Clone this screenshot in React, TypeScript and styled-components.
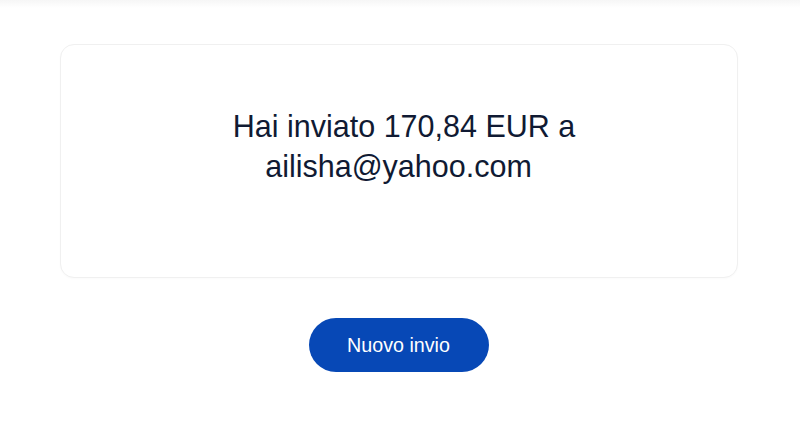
import styled, { createGlobalStyle } from "styled-components";

const GlobalStyle = createGlobalStyle`
  html, body {
    margin: 0;
    padding: 0;
    background: #ffffff;
    font-family: "Liberation Sans", Arial, sans-serif;
  }
`;

const Page = styled.div`
  min-height: 441px;
  background: linear-gradient(#f6f6f6 0, #ffffff 8px);
  padding: 44px 3px 0 0;
  box-sizing: border-box;
  display: flex;
  flex-direction: column;
  align-items: center;
`;

const Card = styled.div`
  width: 678px;
  box-sizing: border-box;
  border: 1px solid #f0f0f0;
  border-radius: 14px;
  padding: 61px 40px 91px;
  background: #fff;
  box-shadow: 0 1px 2px rgba(0, 0, 0, 0.02);
`;

const Message = styled.p`
  margin: 0 auto;
  max-width: 420px;
  text-align: center;
  text-indent: 11px;
  font-size: 30.5px;
  line-height: 40px;
  color: #101a33;
`;

const Button = styled.button`
  margin-top: 40px;
  width: 180px;
  height: 54px;
  border: none;
  border-radius: 27px;
  background: #0748b6;
  color: #ffffff;
  font-family: "Liberation Sans", Arial, sans-serif;
  font-size: 19.7px;
  cursor: pointer;
`;

export default function App() {
  return (
    <>
      <GlobalStyle />
      <Page>
        <Card>
          <Message>Hai inviato 170,84 EUR a ailisha@yahoo.com</Message>
        </Card>
        <Button>Nuovo invio</Button>
      </Page>
    </>
  );
}
